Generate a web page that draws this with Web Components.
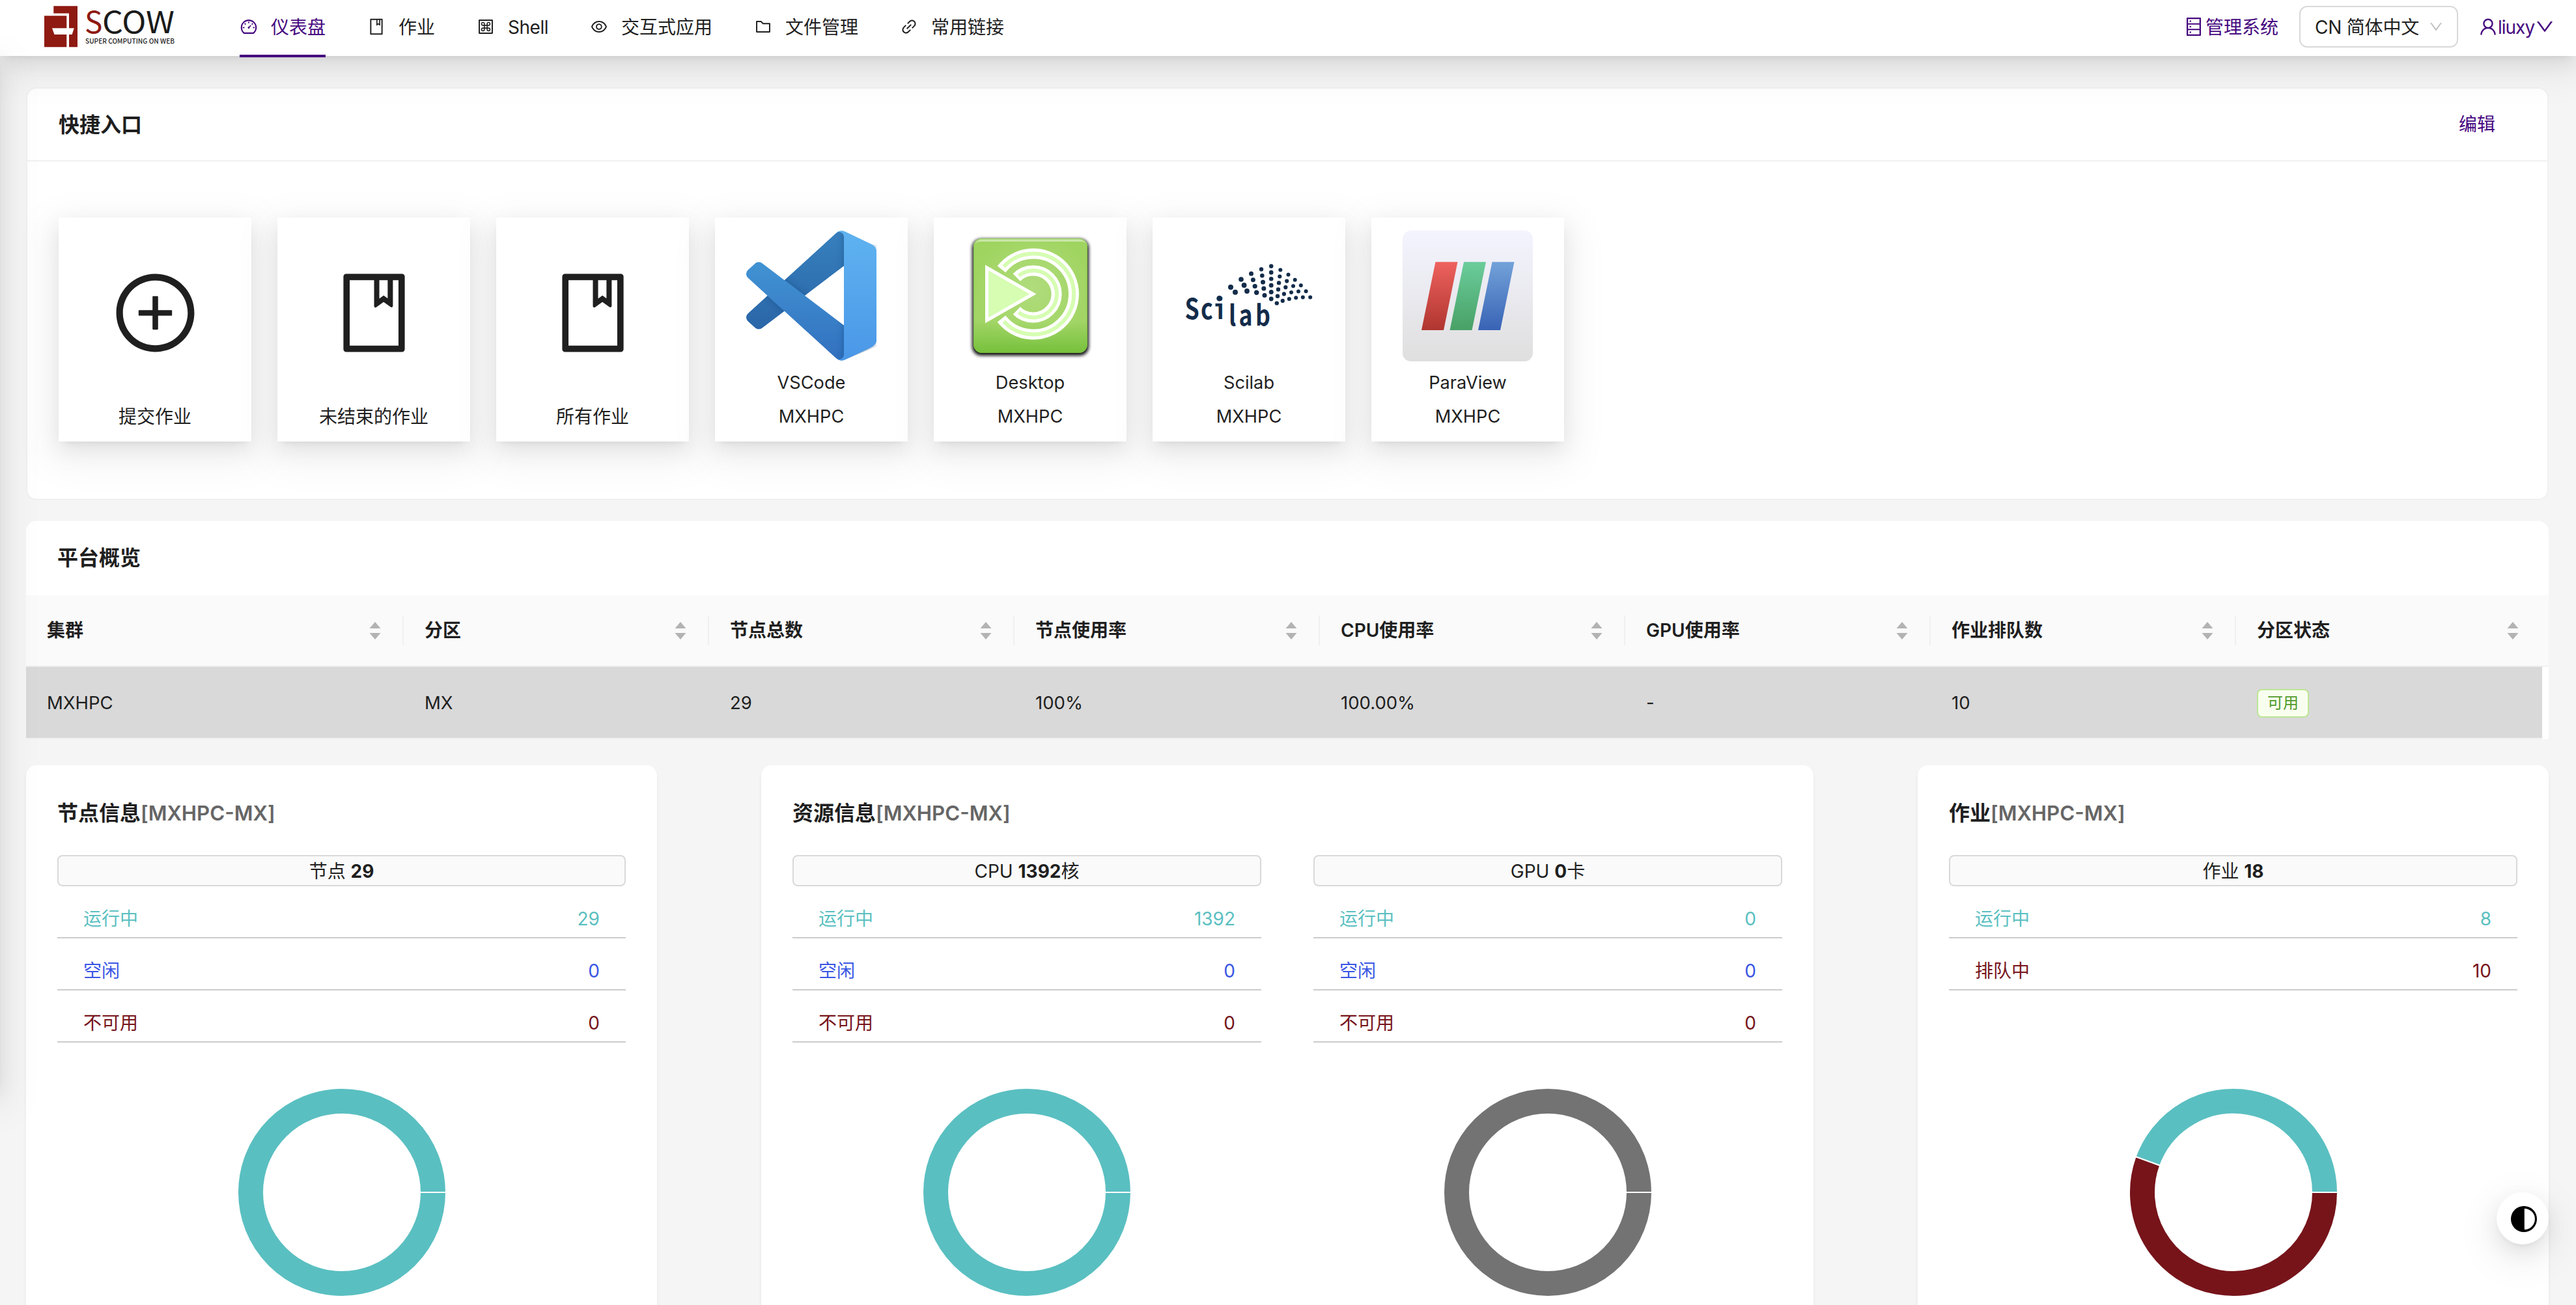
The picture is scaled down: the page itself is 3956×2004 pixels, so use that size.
<!DOCTYPE html>
<html lang="zh-CN">
<head>
<meta charset="utf-8">
<title>SCOW</title>
<style>
  html, body { margin: 0; padding: 0; }
  body {
    height: 2004px; overflow: hidden; background: #f5f5f5; color: #1f1f1f;
    font: 28px/44px Inter, "Noto Sans CJK SC", sans-serif;
    --primary: #45087f;
    --shadow: 0 12px 32px 0 rgba(0,0,0,.08), 0 6px 12px -8px rgba(0,0,0,.12), 0 18px 56px 16px rgba(0,0,0,.05);
  }
</style>
</head>
<body>
<scow-app></scow-app>
<script>
const PATHS = {
  dashboard: '<path d="M924.8 385.6a446.7 446.7 0 00-96-142.4 446.7 446.7 0 00-142.4-96C631.1 123.8 572.5 112 512 112s-119.1 11.8-174.4 35.2a446.7 446.7 0 00-142.4 96 446.7 446.7 0 00-96 142.4C75.8 440.9 64 499.5 64 560c0 132.7 58.3 257.7 159.9 343.1l1.7 1.4c5.8 4.8 13.1 7.5 20.6 7.5h531.7c7.5 0 14.8-2.7 20.6-7.5l1.7-1.4C901.7 817.7 960 692.7 960 560c0-60.5-11.9-119.1-35.2-174.4zM761.4 836H262.6A371.12 371.12 0 01140 560c0-99.4 38.7-192.8 109-263 70.3-70.3 163.7-109 263-109 99.4 0 192.8 38.7 263 109 70.3 70.3 109 163.7 109 263 0 105.6-44.5 205.5-122.6 276zM623.5 421.5a8.03 8.03 0 00-11.3 0L527.7 506c-18.7-5-39.4-.2-54.1 14.5a55.95 55.95 0 000 79.2 55.95 55.95 0 0079.2 0 55.87 55.87 0 0014.5-54.1l84.5-84.5c3.1-3.1 3.1-8.2 0-11.3l-28.3-28.3z"/><path fill="none" stroke="currentColor" stroke-width="60" d="M512 224v96M750 560h96M178 560h96M680 391l66-66M278 325l66 66"/>',
  book: '<path d="M832 64H192c-17.7 0-32 14.3-32 32v832c0 17.7 14.3 32 32 32h640c17.7 0 32-14.3 32-32V96c0-17.7-14.3-32-32-32zm-260 72h96v209.9L621.5 312 572 347.4V136zm220 752H232V136h280v296.9c0 3.3 1 6.6 3 9.3a15.9 15.9 0 0022.3 3.7l83.8-59.9 81.4 59.4c2.7 2 6 3.1 9.4 3.1 8.8 0 16-7.2 16-16V136h64v752z"/>',
  command: '<path d="M880 112H144c-17.7 0-32 14.3-32 32v736c0 17.7 14.3 32 32 32h736c17.7 0 32-14.3 32-32V144c0-17.7-14.3-32-32-32zm-40 728H184V184h656v656z"/><path fill="none" stroke="currentColor" stroke-width="56" d="M434 434V354a80 80 0 10-80 80H670a80 80 0 10-80-80V670a80 80 0 1080-80H354a80 80 0 1080 80V434"/>',
  eye: '<path d="M942.2 486.2C847.4 286.5 704.1 186 512 186c-192.2 0-335.4 100.5-430.2 300.3a60.3 60.3 0 000 51.5C176.6 737.5 319.9 838 512 838c192.2 0 335.4-100.5 430.2-300.3 7.7-16.2 7.7-35 0-51.5zM512 766c-161.3 0-279.4-81.8-362.7-254C232.6 339.8 350.7 258 512 258c161.3 0 279.4 81.8 362.7 254C791.5 684.2 673.4 766 512 766zm-4-430c-97.2 0-176 78.8-176 176s78.8 176 176 176 176-78.8 176-176-78.8-176-176-176zm0 288c-61.9 0-112-50.1-112-112s50.1-112 112-112 112 50.1 112 112-50.1 112-112 112z"/>',
  folder: '<path d="M880 298.4H521L403.7 186.2a8.15 8.15 0 00-5.5-2.2H144c-17.7 0-32 14.3-32 32v592c0 17.7 14.3 32 32 32h736c17.7 0 32-14.3 32-32V330.4c0-17.7-14.3-32-32-32zM840 768H184V256h188.5l119.6 114.4H840V768z"/>',
  link: '<path d="M574 665.4a8.03 8.03 0 00-11.3 0L446.5 781.6c-53.8 53.8-144.6 59.5-204 0-59.5-59.5-53.8-150.2 0-204l116.2-116.2c3.1-3.1 3.1-8.2 0-11.3l-39.8-39.8a8.03 8.03 0 00-11.3 0L191.4 526.5c-84.6 84.6-84.6 221.5 0 306s221.5 84.6 306 0l116.2-116.2c3.1-3.1 3.1-8.2 0-11.3L574 665.4zm258.6-474c-84.6-84.6-221.5-84.6-306 0L410.3 307.6a8.03 8.03 0 000 11.3l39.7 39.7c3.1 3.1 8.2 3.1 11.3 0l116.2-116.2c53.8-53.8 144.6-59.5 204 0 59.5 59.5 53.8 150.2 0 204L665.3 562.6a8.03 8.03 0 000 11.3l39.8 39.8c3.1 3.1 8.2 3.1 11.3 0l116.2-116.2c84.5-84.6 84.5-221.5 0-306.1zM610.1 372.3a8.03 8.03 0 00-11.3 0L372.3 598.7a8.03 8.03 0 000 11.3l39.6 39.6c3.1 3.1 8.2 3.1 11.3 0l226.4-226.4c3.1-3.1 3.1-8.2 0-11.3l-39.5-39.6z"/>',
  database: '<path d="M832 64H192c-17.7 0-32 14.3-32 32v832c0 17.7 14.3 32 32 32h640c17.7 0 32-14.3 32-32V96c0-17.7-14.3-32-32-32zm-600 72h560v208H232V136zm560 480H232V408h560v208zm0 272H232V680h560v208zM304 240a40 40 0 1080 0 40 40 0 10-80 0zm0 272a40 40 0 1080 0 40 40 0 10-80 0zm0 272a40 40 0 1080 0 40 40 0 10-80 0z"/>',
  user: '<path d="M858.5 763.6a374 374 0 00-80.6-119.5 375.63 375.63 0 00-119.5-80.6c-.4-.2-.8-.3-1.2-.5C719.5 518 760 444.7 760 362c0-137-111-248-248-248S264 225 264 362c0 82.7 40.5 156 102.8 201.1-.4.2-.8.3-1.2.5-44.8 18.9-85 46-119.5 80.6a375.63 375.63 0 00-80.6 119.5A371.7 371.7 0 00136 901.8a8 8 0 008 8.2h60c4.4 0 7.9-3.5 8-7.8 2-77.2 33-149.5 87.8-204.3 56.7-56.7 132-87.9 212.2-87.9s155.5 31.2 212.2 87.9C779 752.7 810 825 812 902.2c.1 4.4 3.6 7.8 8 7.8h60a8 8 0 008-8.2c-1-47.8-10.9-94.3-29.5-138.2zM512 534c-45.9 0-89.1-17.9-121.6-50.4S340 407.9 340 362c0-45.9 17.9-89.1 50.4-121.6S466.1 190 512 190s89.1 17.9 121.6 50.4S684 316.1 684 362c0 45.9-17.9 89.1-50.4 121.6S557.9 534 512 534z"/>',
  down: '<path d="M884 256h-75c-5.1 0-9.9 2.5-12.9 6.6L512 654.2 227.9 262.6c-3-4.1-7.8-6.6-12.9-6.6h-75c-6.5 0-10.3 7.4-6.5 12.7l352.6 486.1c12.8 17.6 39 17.6 51.7 0l352.6-486.1c3.9-5.3.1-12.7-6.4-12.7z"/>',
  plus: '<path d="M696 480H544V328c0-4.4-3.6-8-8-8h-48c-4.4 0-8 3.6-8 8v152H328c-4.4 0-8 3.6-8 8v48c0 4.4 3.6 8 8 8h152v152c0 4.4 3.6 8 8 8h48c4.4 0 8-3.6 8-8V544h152c4.4 0 8-3.6 8-8v-48c0-4.4-3.6-8-8-8z"/><path d="M512 64C264.6 64 64 264.6 64 512s200.6 448 448 448 448-200.6 448-448S759.4 64 512 64zm0 820c-205.4 0-372-166.6-372-372s166.6-372 372-372 372 166.6 372 372-166.6 372-372 372z"/>',
  contrast: '<path d="M512 0a512 512 0 100 1024A512 512 0 00512 0zm20 100a412 412 0 010 824z"/>'
};

const define = (name, render) => customElements.define(name, class extends HTMLElement {
  connectedCallback() {
    if (this.shadowRoot) return;
    this.attachShadow({ mode: 'open' }).innerHTML = render(this);
  }
});
const attr = (el, n, d = '') => el.getAttribute(n) ?? d;

define('scow-icon', el => {
  const s = attr(el, 'size', '28');
  return `<style>:host{display:block;flex:none;width:${s}px;height:${s}px}svg{display:block}</style>
  <svg width="${s}" height="${s}" viewBox="0 0 1024 1024" fill="currentColor">${PATHS[attr(el, 'name')]}</svg>`;
});

define('scow-logo', () => `<style>:host{display:block;flex:none;width:200px;height:64px}svg{display:block;overflow:visible}</style>
<svg width="200" height="64" viewBox="68 9 200 64">
  <path fill="#8e1a12" d="M82.3 9.3H119v63h-13V20.6H82.3zM68 24.3h34.3v48H68z"/>
  <path fill="#fff" d="M80 43.3h33.8L110.600 53H83.500z"/>
  <text font-family="Noto Sans CJK SC" font-size="46" y="50.500" x="130" fill="#8e1a12">S</text>
  <text font-family="Noto Sans CJK SC" font-size="46" y="50.500" x="157" textLength="111" lengthAdjust="spacingAndGlyphs" fill="#1b1b1b">COW</text>
  <text font-family="Noto Sans CJK SC" font-weight="500" font-size="10.500" y="67" x="131" textLength="137" lengthAdjust="spacingAndGlyphs" fill="#1b1b1b">SUPER COMPUTING ON WEB</text>
</svg>`);

define('scow-nav-item', el => `<style>
  :host{display:flex;align-items:center;gap:20px;height:82px;position:relative}
  :host([active]){color:var(--primary)}
  :host([active])::after{content:"";position:absolute;left:0;right:0;top:84px;height:4px;background:var(--primary)}
  span{padding-top:2px}
  :host([latin]) span{letter-spacing:-.5px}
</style><scow-icon name="${attr(el, 'icon')}"></scow-icon><span><slot></slot></span>`);

define('scow-header', () => `<style>
  :host{display:flex;align-items:center;height:82px;padding:0 32px 4px 68px;background:#fff;box-shadow:var(--shadow);position:relative;z-index:2}
  nav{display:flex;gap:64px;margin-left:100px;flex:1}
  .link{display:flex;align-items:center;color:var(--primary);gap:2px}
  .link span,.select span,.user span{padding-top:1px}
  .select{display:flex;align-items:center;justify-content:space-between;box-sizing:border-box;width:244px;height:64px;margin:0 30px 0 32px;padding:0 20px 0 22px;border:2px solid #d9d9d9;border-radius:12px}
  .select span{letter-spacing:-.2px}
  .select scow-icon{color:#bfbfbf}
  .user{display:flex;align-items:center;color:var(--primary)}
  .user span{width:56px;margin-left:-1px;letter-spacing:-1px;white-space:nowrap}
</style>
<scow-logo></scow-logo>
<nav>
  <scow-nav-item icon="dashboard" active>仪表盘</scow-nav-item>
  <scow-nav-item icon="book">作业</scow-nav-item>
  <scow-nav-item icon="command" latin>Shell</scow-nav-item>
  <scow-nav-item icon="eye">交互式应用</scow-nav-item>
  <scow-nav-item icon="folder">文件管理</scow-nav-item>
  <scow-nav-item icon="link">常用链接</scow-nav-item>
</nav>
<div class="link"><scow-icon name="database" size="32"></scow-icon><span>管理系统</span></div>
<div class="select"><span>CN 简体中文</span><scow-icon name="down" size="24"></scow-icon></div>
<div class="user"><scow-icon name="user" size="32"></scow-icon><span>liuxy</span><scow-icon name="down" size="32"></scow-icon></div>`);

const SCILAB_DOTS = [[54.6,104.3,4.300],
  [72,87,4],[79,94.700,4],[88,75,3.800],[92.600,84,3.900],[97,93,3.900],
  [103.500,66.300,3.500],[106.400,75.700,3.500],[109.200,85.500,3.600],[111.700,95.300,3.700],
  [119,59.500,3.200],[120.300,69.300,3.300],[121.500,79.200,3.500],[122.800,89.100,3.500],[124,99.400,3.500],
  [134.200,54.700,3.200],[134.200,64.400,3.300],[134.200,74.200,3.300],[134.200,84.200,3.400],[134.200,94.400,3.500],[134.200,105,3.400],
  [148.300,60.600,3],[147.300,70.500,3.100],[146,80.400,3.200],[145,90.500,3.200],[144,100.700,3.200],[142.800,111.600,3.200],
  [160.500,67.800,3],[158.200,77.600,3.100],[156.300,87.200,3.100],[153.900,97.400,3.100],[151.800,107.900,3.100],
  [170.700,75.700,3],[168,85.200,3],[165,95,3],[161.800,105,3.100],
  [179.800,84.200,3],[176,93.500,3],[172.200,103.200,3],
  [187.600,93.200,3],[182.800,102.400,3],[194.200,102.600,3]];

const APPS = {
  vscode: `<defs>
      <linearGradient id="a" x1="0" y1="0" x2="0" y2="1"><stop stop-color="#3780bd"/><stop offset="1" stop-color="#2a66a8"/></linearGradient>
      <linearGradient id="b" x1="0" y1="0" x2="0" y2="1"><stop stop-color="#4193d3"/><stop offset="1" stop-color="#3270bf"/></linearGradient>
      <linearGradient id="c" x1="0" y1="0" x2="0" y2="1"><stop stop-color="#5fb3f0"/><stop offset="1" stop-color="#4a97e8"/></linearGradient>
      <filter id="s" x="-20%" y="-20%" width="140%" height="140%"><feDropShadow dx="0" dy="0" stdDeviation="3" flood-color="#123a70" flood-opacity=".4"/></filter>
      <clipPath id="k"><path d="M96.461 10.796L75.857.876a6.250 6.250 0 00-7.107 1.207L1.299 63.583a4.167 4.167 0 00.004 6.162l5.510 5.009a4.167 4.167 0 005.321.237L75 27.300V72.700L12.134 25.010a4.167 4.167 0 00-5.321.236l-5.510 5.009a4.167 4.167 0 00-.004 6.162L68.750 97.917a6.250 6.250 0 007.107 1.207L100 89V11z"/></clipPath>
    </defs>
    <g transform="scale(2)">
      <g clip-path="url(#k)">
      <path fill="url(#a)" d="M96.4614 10.7962L75.8569 .8755C73.4719-.2728 70.6217.2116 68.75 2.0833L1.2986 63.5832C-.5157 65.2373-.5136 68.0937 1.3031 69.7452L6.8127 74.754C8.2979 76.1042 10.5347 76.2036 12.1338 74.9905L93.3609 13.3699z"/>
      <path fill="url(#b)" filter="url(#s)" d="M96.4614 89.2038L75.8569 99.1245C73.4719 100.273 70.6217 99.7884 68.75 97.9167L1.2986 36.4169C-.5157 34.7627-.5136 31.9063 1.3031 30.2548L6.8127 25.246C8.2979 23.8958 10.5347 23.7964 12.1338 25.0095L93.3609 86.6301z"/>
      <path fill="url(#c)" filter="url(#s)" d="M75.8578 99.1263C73.4721 100.274 70.6219 99.7885 68.75 97.9166 71.0564 100.223 75 98.5895 75 95.3278V4.6721C75 1.4104 71.0564-.2231 68.75 2.0833 70.6219.2114 73.4721-.2737 75.8578.8736L96.4587 10.7807C98.6234 11.8217 100 14.0112 100 16.4132V83.5871C100 85.9892 98.6234 88.1786 96.4586 89.2196z"/>
      </g>
      <path fill="url(#c)" d="M75.8578 99.1263C73.4721 100.274 70.6219 99.7885 68.75 97.9166 71.0564 100.223 75 98.5895 75 95.3278V4.6721C75 1.4104 71.0564-.2231 68.75 2.0833 70.6219.2114 73.4721-.2737 75.8578.8736L96.4587 10.7807C98.6234 11.8217 100 14.0112 100 16.4132V83.5871C100 85.9892 98.6234 88.1786 96.4586 89.2196z"/>
    </g>`,
  mate: `<defs>
      <linearGradient id="g" x1="0" y1="0" x2="0" y2="1"><stop stop-color="#9fd45f"/><stop offset=".72" stop-color="#a2d566"/><stop offset="1" stop-color="#76c13c"/></linearGradient>
      <radialGradient id="r" cx=".52" cy=".42" r=".5"><stop stop-color="#b0dc7c"/><stop offset="1" stop-color="#b0dc7c" stop-opacity="0"/></radialGradient>
      <filter id="s" x="-20%" y="-20%" width="140%" height="140%"><feGaussianBlur stdDeviation="2.500"/></filter>
      <clipPath id="p"><rect x="13" y="12" width="175" height="176" rx="13"/></clipPath>
    </defs>
    <rect x="11" y="13" width="179" height="179" rx="14" fill="#111" filter="url(#s)"/>
    <rect x="13" y="12" width="175" height="176" rx="13" fill="url(#g)"/>
    <rect x="13" y="12" width="175" height="176" rx="13" fill="url(#r)"/>
    <path clip-path="url(#p)" d="M13 12h175v14q-1-9-10-9H24q-10 0-11 9z" fill="#c9e7a6"/>
    <rect x="13.700" y="12.700" width="173.600" height="174.600" rx="12.500" fill="none" stroke="#7fbf3f" stroke-opacity=".6" stroke-width="1.400"/>
    <g fill="none" stroke-linejoin="round">
      <path stroke="#fff" stroke-width="16" d="M56 59.500A62 62 0 1156 135.500M79.200 72A36 36 0 1179.200 123"/>
      <path stroke="#d6fdb2" stroke-width="6" d="M59.600 55.400A62 62 0 1159.600 139.600M82.500 69.400A36 36 0 1182.500 125.600"/>
    </g>
    <path d="M33.500 57v81L104.500 97.500z" fill="#d6fdb2" stroke="#fff" stroke-width="5"/>`,
  scilab: `<g fill="#132c4a">${SCILAB_DOTS.map(d => `<circle cx="${d[0]}" cy="${d[1]}" r="${d[2]}"/>`).join('')}
      <g font-family="Noto Sans CJK SC" font-weight="700" font-size="43.500">
        <text transform="translate(1.500 136) scale(.82 1)" x="0 30 60">Sci</text>
        <text transform="translate(69 145.500) scale(.82 1)" x="0 19 50">lab</text>
      </g>
      <path d="M48.500 112h7v4.500h-7z"/></g>`,
  paraview: `<defs>
      <linearGradient id="g" x1="0" y1="0" x2="0" y2="1"><stop stop-color="#f4f4ff"/><stop offset="1" stop-color="#dfdfdf"/></linearGradient>
      <linearGradient id="r" x1="0" y1="0" x2="0" y2="1"><stop stop-color="#ee625e"/><stop offset="1" stop-color="#b03530"/></linearGradient>
      <linearGradient id="n" x1="0" y1="0" x2="0" y2="1"><stop stop-color="#6bcc9b"/><stop offset="1" stop-color="#48a166"/></linearGradient>
      <linearGradient id="b" x1="0" y1="0" x2="0" y2="1"><stop stop-color="#73a2d9"/><stop offset="1" stop-color="#3863b5"/></linearGradient>
    </defs>
    <rect width="200" height="201" rx="13" fill="url(#g)"/>
    <path fill="url(#r)" d="M50.500 48.300h34L63 153H29z"/><path fill="url(#n)" d="M94 48.300h34L106.500 153h-34z"/><path fill="url(#b)" d="M137.500 48.300h34L150 153h-34z"/>`
};

define('quick-entry', el => `<style>
  :host{display:flex;flex-direction:column;align-items:center;box-sizing:border-box;width:296px;height:344px;padding:20px 0 16px;background:#fff;box-shadow:var(--shadow)}
  .pic{display:flex;flex:none;height:252px;margin-bottom:12px;align-items:center;justify-content:center}
  .app{height:200px}
  svg{display:block}
  span{display:block;height:44px}
  .name{margin-bottom:8px}
  .lat{font-size:27.200px}
</style>
${el.hasAttribute('app')
  ? `<div class="pic app"><svg width="200" height="201" viewBox="0 0 200 201" overflow="visible">${APPS[attr(el, 'app')]}</svg></div><span class="name lat">${attr(el, 'label')}</span>`
  : `<div class="pic"><scow-icon name="${attr(el, 'icon')}" size="137"></scow-icon></div>`}
<span class="${el.hasAttribute('app') ? 'lat' : ''}"><slot></slot></span>`);

define('quick-panel', () => `<style>
  :host{display:block;background:#fff;border:2px solid #f0f0f0;border-radius:16px}
  header{display:flex;justify-content:space-between;align-items:center;height:110px;border-bottom:2px solid #f0f0f0;padding:0 80px 0 48px}
  h2{margin:0;padding-top:1px;font-size:32px;font-weight:600}
  a{color:var(--primary)}
  div{display:flex;gap:40px;padding:86px 48px 88px}
</style>
<header><h2>快捷入口</h2><a>编辑</a></header>
<div>
  <quick-entry icon="plus">提交作业</quick-entry>
  <quick-entry icon="book">未结束的作业</quick-entry>
  <quick-entry icon="book">所有作业</quick-entry>
  <quick-entry app="vscode" label="VSCode">MXHPC</quick-entry>
  <quick-entry app="mate" label="Desktop">MXHPC</quick-entry>
  <quick-entry app="scilab" label="Scilab">MXHPC</quick-entry>
  <quick-entry app="paraview" label="ParaView">MXHPC</quick-entry>
</div>`);

const COLS = ['集群', '分区', '节点总数', '节点使用率', 'CPU使用率', 'GPU使用率', '作业排队数', '分区状态'];
const ROW = ['MXHPC', 'MX', '29', '100%', '100.00%', '-', '10'];
define('platform-table', () => `<style>
  :host{display:block;background:#fff;border-radius:16px 16px 0 0}
  h2{margin:0;height:114px;line-height:114px;padding-left:48px;font-size:32px;font-weight:600}
  .row{display:grid;grid-template-columns:580px repeat(7,469px);align-items:center;box-sizing:border-box}
  .head{height:110px;background:#fafafa;border-bottom:2px solid #f0f0f0;font-weight:600}
  .head div{display:flex;align-items:center;justify-content:space-between;height:46px;padding:0 30px 0 32px;border-right:2px solid #f0f0f0;box-sizing:border-box}
  .head div:last-child{border-right-color:transparent}
  .head svg{display:block;fill:#b3b3b3}
  .body{width:3863.500px;height:111px;background:#d9d9d9;border-bottom:2px solid #f0f0f0}
  .body div{padding-left:32px;font-size:27.500px}
  .tag{display:inline-block;box-sizing:border-box;height:44px;line-height:40px;padding:0 14px;font-size:24px;color:#4f9a2b;background:#f9ffef;border:2px solid #bde695;border-radius:8px;vertical-align:middle}
</style>
<h2>平台概览</h2>
<div class="row head">${COLS.map(c => `<div><span>${c}</span><svg width="24" height="28" viewBox="0 0 24 28"><path d="M12 1l8.500 10h-17zM3.500 18h17L12 28z"/></svg></div>`).join('')}</div>
<div class="row body">${ROW.map(c => `<div>${c}</div>`).join('')}<div><span class="tag">可用</span></div></div>`);

define('stat-row', el => `<style>
  :host{display:flex;justify-content:space-between;box-sizing:border-box;height:80px;padding:28px 40px 0;border-bottom:2px solid #ccc;color:${attr(el, 'color')}}
</style><span><slot></slot></span><span>${attr(el, 'value')}</span>`);

define('ring-chart', el => {
  const parts = JSON.parse(attr(el, 'parts'));
  const total = parts.reduce((s, p) => s + p[0], 0);
  const at = (r, a) => `${(160 + r * Math.cos(a)).toFixed(2)} ${(160 - r * Math.sin(a)).toFixed(2)}`;
  let a = 0;
  const arcs = parts.map(([v, c]) => {
    const b = a + v / total * Math.PI * 2, m = (a + b) / 2;
    const d = `M${at(160, a)}A160 160 0 0 0 ${at(160, m)}A160 160 0 0 0 ${at(160, b)}L${at(120, b)}A120 120 0 0 1 ${at(120, m)}A120 120 0 0 1 ${at(120, a)}Z`;
    a = b;
    return `<path d="${d}" fill="${c}" stroke="#fff" stroke-width="2"/>`;
  }).join('');
  return `<style>:host{display:block;margin:70px auto 0;width:320px;height:320px}svg{display:block}</style>
  <svg width="320" height="320" viewBox="0 0 320 320">${arcs}</svg>`;
});

define('stat-block', el => `<style>
  :host{display:block;flex:1}
  .title{box-sizing:border-box;height:48px;line-height:47px;text-align:center;border:2px solid #d9d9d9;border-radius:8px;background:#fafafa}
  b{font-weight:700}
  .rows{height:240px}
</style>
<div class="title">${attr(el, 'label')} <b>${attr(el, 'total')}</b>${attr(el, 'unit')}</div>
<div class="rows"><slot></slot></div>
<ring-chart parts='${attr(el, 'parts')}'></ring-chart>`);

define('info-card', el => `<style>
  :host{display:block;box-sizing:border-box;height:900px;padding:52px 48px 0;background:#fff;border-radius:16px;box-shadow:0 2px 4px rgba(0,0,0,.03),0 2px 12px -2px rgba(0,0,0,.02),0 4px 8px rgba(0,0,0,.02)}
  h2{margin:0 0 42px;font-size:32px;line-height:44px;font-weight:600}
  h2 span{color:#666;font-size:31.200px}
  div{display:flex;gap:80px}
</style><h2>${attr(el, 'name')}<span>[MXHPC-MX]</span></h2><div><slot></slot></div>`);

define('theme-button', () => `<style>
  :host{display:flex;align-items:center;justify-content:center;position:absolute;left:3834px;top:1831px;width:80px;height:80px;padding:2px 0 0 3px;box-sizing:border-box;border-radius:50%;background:#fff;color:#000;box-shadow:var(--shadow);z-index:3}
</style><scow-icon name="contrast" size="40"></scow-icon>`);

define('drawer-shadow', () => `<style>
  :host{display:block;position:absolute;left:-400px;top:86px;width:400px;height:1584px;box-shadow:var(--shadow);z-index:4;pointer-events:none}
</style>`);

define('scow-app', () => `<style>
  :host{display:block;position:relative;height:2004px;overflow:hidden}
  main{display:flex;flex-direction:column;padding:48px 42px 0 40px}
  platform-table{margin:32px 0 40px}
  section{display:grid;grid-template-columns:969px 1616px 969px;justify-content:space-between}
</style>
<scow-header></scow-header>
<main>
  <quick-panel></quick-panel>
  <platform-table></platform-table>
  <section>
    <info-card name="节点信息">
      <stat-block label="节点" total="29" parts='[[29,"#5abfc1"]]'>
        <stat-row color="#5abfc1" value="29">运行中</stat-row><stat-row color="#3956e4" value="0">空闲</stat-row><stat-row color="#76141a" value="0">不可用</stat-row>
      </stat-block>
    </info-card>
    <info-card name="资源信息">
      <stat-block label="CPU" total="1392" unit="核" parts='[[1392,"#5abfc1"]]'>
        <stat-row color="#5abfc1" value="1392">运行中</stat-row><stat-row color="#3956e4" value="0">空闲</stat-row><stat-row color="#76141a" value="0">不可用</stat-row>
      </stat-block>
      <stat-block label="GPU" total="0" unit="卡" parts='[[1,"#737373"]]'>
        <stat-row color="#5abfc1" value="0">运行中</stat-row><stat-row color="#3956e4" value="0">空闲</stat-row><stat-row color="#76141a" value="0">不可用</stat-row>
      </stat-block>
    </info-card>
    <info-card name="作业">
      <stat-block label="作业" total="18" parts='[[8,"#5abfc1"],[10,"#76141a"]]'>
        <stat-row color="#5abfc1" value="8">运行中</stat-row><stat-row color="#76141a" value="10">排队中</stat-row>
      </stat-block>
    </info-card>
  </section>
</main>
<theme-button></theme-button>
<drawer-shadow></drawer-shadow>`);
</script>
</body>
</html>
